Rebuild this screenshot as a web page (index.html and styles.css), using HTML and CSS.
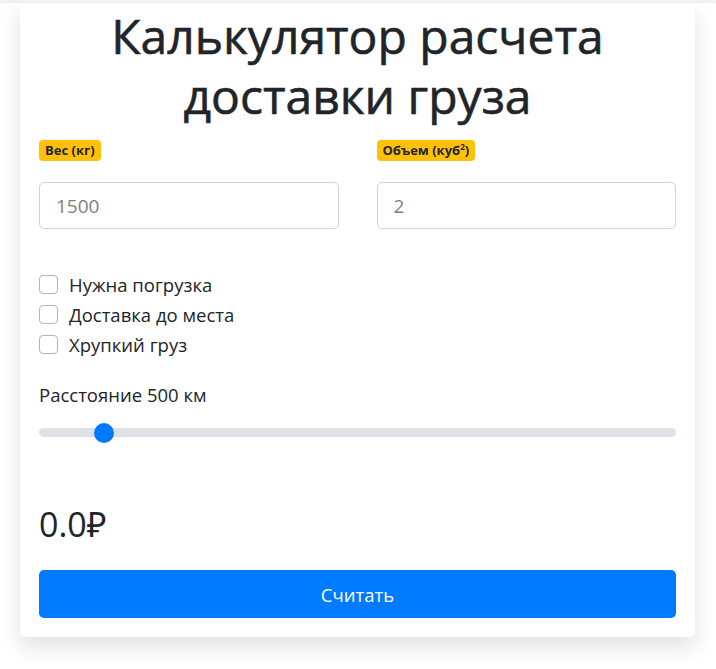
FILE: index.html
```html
<!DOCTYPE html>
<html lang="ru">

<head>
    <meta charset="UTF-8">
    <title>Калькулятор доставки</title>
    <link rel="stylesheet" href="styles.css">
</head>

<body>

    <div class="calc-card">
        <h1 class="calc-title">Калькулятор расчета доставки груза</h1>

        <!-- Weight / volume -->
        <div class="field-row">
            <div class="field">
                <span class="badge">Вес (кг)</span>
                <input type="text" class="form-input" placeholder="1500">
            </div>
            <div class="field">
                <span class="badge">Объем (куб<sup>2</sup>)</span>
                <input type="text" class="form-input" placeholder="2">
            </div>
        </div>

        <!-- Options -->
        <div class="options">
            <label class="check"><input type="checkbox"><span>Нужна погрузка</span></label>
            <label class="check"><input type="checkbox"><span>Доставка до места</span></label>
            <label class="check"><input type="checkbox"><span>Хрупкий груз</span></label>
        </div>

        <!-- Distance -->
        <div class="distance">
            <p class="distance-label">Расстояние <span id="distValue">500</span> км</p>
            <input type="range" class="range" id="distRange" min="50" max="5100" step="50" value="500">
        </div>

        <div class="total">0.0₽</div>

        <button class="calc-btn">Считать</button>
    </div>

    <script>
        // Update distance label
        const range = document.getElementById('distRange');
        range.addEventListener('input', () => {
            document.getElementById('distValue').textContent = range.value;
        });
    </script>

</body>

</html>
```

FILE: styles.css
```css
/* Global Styles */
body {
    font-family: 'Open Sans', 'Noto Sans', sans-serif;
    background: #fff;
    color: #212529;
    margin: 0;
    border-top: 3px solid #f1f1f1;
    padding: 0 21px 30px 20px;
}

/* Card */
.calc-card {
    background: #fff;
    border-radius: 5px;
    box-shadow: 0 10px 22px rgba(0, 0, 0, 0.12);
    padding: 0 19px 19px;
}

.calc-title {
    margin: 0 0 12px;
    padding-top: 3px;
    text-align: center;
    font-size: 48px;
    font-weight: 400;
    line-height: 60px;
    -webkit-text-stroke: 0.6px #212529;
}

/* Fields */
.field-row {
    display: grid;
    grid-template-columns: 1fr 1fr;
    gap: 38px;
}

.badge {
    display: inline-block;
    background: #ffc107;
    color: #212529;
    font-size: 13px;
    font-weight: 700;
    line-height: 15px;
    padding: 3px 6px;
    border-radius: 4px;
}

.badge sup {
    font-size: 8px;
    line-height: 0;
}

.form-input {
    display: block;
    width: 100%;
    box-sizing: border-box;
    margin-top: 21px;
    height: 47px;
    padding: 0 16px;
    border: 1px solid #ced4da;
    border-radius: 5px;
    font-family: inherit;
    font-size: 19px;
    color: #495057;
}

.form-input::placeholder {
    color: #7b7f83;
}

/* Options */
.options {
    margin-top: 40px;
}

.check {
    display: flex;
    align-items: center;
    height: 30px;
    font-size: 18.5px;
}

.check input {
    appearance: none;
    width: 19px;
    height: 19px;
    margin: 0 11px 0 0;
    border: 1px solid #adb5bd;
    border-radius: 4px;
    background: #fff;
}

/* Distance */
.distance {
    margin-top: 23px;
}

.distance-label {
    margin: 0;
    font-size: 18.5px;
    line-height: 26px;
}

.range {
    appearance: none;
    display: block;
    width: 100%;
    height: 9px;
    margin: 20px 0 0;
    background: #dee2e6;
    border-radius: 5px;
}

.range::-webkit-slider-thumb {
    appearance: none;
    width: 20px;
    height: 20px;
    border-radius: 50%;
    background: #007bff;
    border: none;
}

/* Total */
.total {
    margin-top: 65px;
    font-size: 34px;
    line-height: 44px;
    font-weight: 400;
}

/* Button */
.calc-btn {
    display: block;
    width: 100%;
    height: 48px;
    margin-top: 24px;
    border: none;
    border-radius: 5px;
    background: #007bff;
    color: #fff;
    font-family: inherit;
    font-size: 18.5px;
    cursor: pointer;
}

.calc-btn:hover {
    background: #0069d9;
}
```
